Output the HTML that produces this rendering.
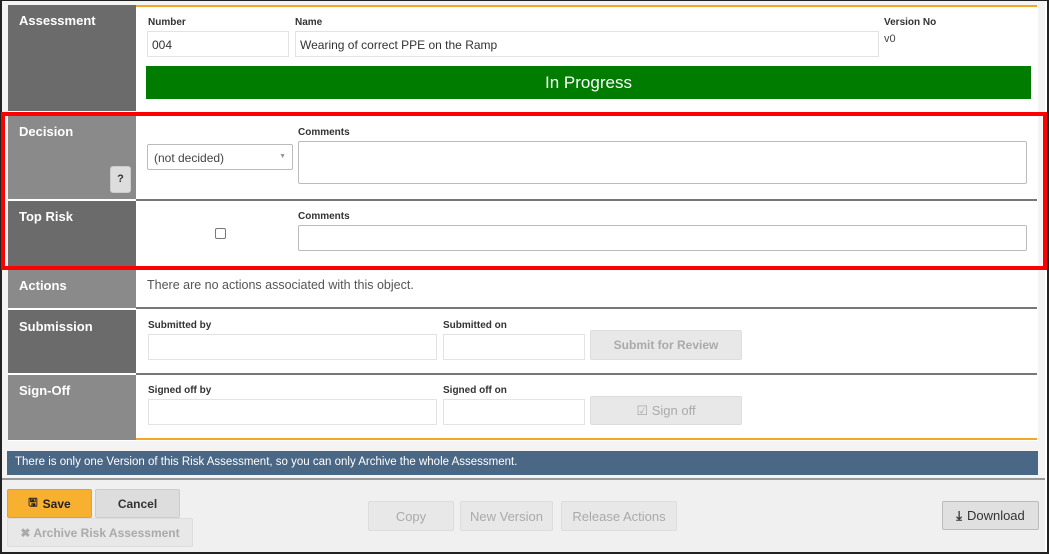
<!DOCTYPE html>
<html><head><style>
*{box-sizing:border-box;margin:0;padding:0}
body{width:1049px;height:554px;background:#fff;font-family:"Liberation Sans",sans-serif;position:relative;overflow:hidden}
.a{position:absolute}
.lab{color:#fff;font-weight:bold;font-size:13px;padding:8px 0 0 11px}
.fl{font-size:10px;font-weight:bold;color:#333}
.in{background:#fff;border:1px solid #e3e3e3}
.btn{background:#e8e8e8;border:1px solid #ddd;border-radius:2px;color:#aaa;font-size:12px;font-weight:bold;text-align:center;display:flex;align-items:center;justify-content:center;gap:5px}
.sep{background:#777;height:2px}
</style></head><body>
<div class="a" style="left:0;top:0;width:1049px;height:554px;border:2px solid #222;border-top:1px solid #222;background:#fff"></div>
<div class="a" style="left:2px;top:1px;width:1043px;height:551px;background:#f4f4f4"></div>
<div class="a" style="left:8px;top:5px;width:1030px;height:436px;background:#fff"></div>
<div class="a lab" style="left:8px;top:5px;width:128px;height:106px;background:#6b6b6b">Assessment</div>
<div class="a lab" style="left:8px;top:116px;width:128px;height:83px;background:#8a8a8a">Decision</div>
<div class="a lab" style="left:8px;top:201px;width:128px;height:66px;background:#6b6b6b">Top Risk</div>
<div class="a lab" style="left:8px;top:269px;width:128px;height:39px;background:#8a8a8a;padding-top:9px">Actions</div>
<div class="a lab" style="left:8px;top:310px;width:128px;height:63px;background:#6b6b6b;padding-top:9px">Submission</div>
<div class="a lab" style="left:8px;top:375px;width:128px;height:65px;background:#8a8a8a">Sign-Off</div>
<div class="a" style="left:136px;top:5px;width:901px;height:2px;background:#f5a623"></div>
<div class="a" style="left:136px;top:438px;width:901px;height:2px;background:#f5a623"></div>
<div class="a sep" style="left:136px;top:199px;width:901px"></div>
<div class="a sep" style="left:136px;top:307px;width:901px"></div>
<div class="a sep" style="left:136px;top:373px;width:901px"></div>
<div class="a fl" style="left:148px;top:17px">Number</div>
<div class="a in" style="left:147px;top:31px;width:142px;height:26px;font-size:12px;color:#333;padding:6px 4px">004</div>
<div class="a fl" style="left:295px;top:17px">Name</div>
<div class="a in" style="left:295px;top:31px;width:584px;height:26px;font-size:12px;color:#333;padding:6px 4px">Wearing of correct PPE on the Ramp</div>
<div class="a fl" style="left:884px;top:17px">Version No</div>
<div class="a" style="left:884px;top:33px;font-size:11px;color:#444">v0</div>
<div class="a" style="left:146px;top:66px;width:885px;height:33px;background:#007c00;color:#fff;font-size:17px;text-align:center;line-height:33px">In Progress</div>
<div class="a" style="left:147px;top:144px;width:146px;height:26px;border:1px solid #bbb;border-radius:2px;font-size:12px;color:#444;padding:6px 6px">(not decided)<span style="position:absolute;right:6px;top:8px;font-size:7px;color:#999">▼</span></div>
<div class="a fl" style="left:298px;top:127px">Comments</div>
<div class="a" style="left:298px;top:141px;width:729px;height:43px;border:1px solid #bbb;border-radius:2px"></div>
<div class="a" style="left:110px;top:166px;width:21px;height:27px;background:#ddd;border:1px solid #ccc;border-radius:3px;font-size:11px;font-weight:bold;color:#333;text-align:center;line-height:25px">?</div>
<div class="a" style="left:215px;top:228px;width:11px;height:11px;border:1px solid #777;border-radius:2px"></div>
<div class="a fl" style="left:298px;top:211px">Comments</div>
<div class="a" style="left:298px;top:225px;width:729px;height:26px;border:1px solid #bbb;border-radius:2px"></div>
<div class="a" style="left:147px;top:278px;font-size:12.5px;color:#555">There are no actions associated with this object.</div>
<div class="a fl" style="left:148px;top:320px">Submitted by</div>
<div class="a in" style="left:148px;top:334px;width:289px;height:26px"></div>
<div class="a fl" style="left:443px;top:320px">Submitted on</div>
<div class="a in" style="left:443px;top:334px;width:142px;height:26px"></div>
<div class="a btn" style="left:590px;top:330px;width:152px;height:30px">Submit for Review</div>
<div class="a fl" style="left:148px;top:385px">Signed off by</div>
<div class="a in" style="left:148px;top:399px;width:289px;height:26px"></div>
<div class="a fl" style="left:443px;top:385px">Signed off on</div>
<div class="a in" style="left:443px;top:399px;width:142px;height:26px"></div>
<div class="a btn" style="left:590px;top:396px;width:152px;height:29px;font-weight:normal;font-size:13px">☑ Sign off</div>
<div class="a" style="left:7px;top:451px;width:1031px;height:24px;background:#4a6785;color:#fff;font-size:11.5px;padding:5px 8px">There is only one Version of this Risk Assessment, so you can only Archive the whole Assessment.</div>
<div class="a" style="left:2px;top:478px;width:1043px;height:2px;background:#999"></div>
<div class="a" style="left:2px;top:480px;width:1043px;height:72px;background:#f0f0f0"></div>
<div class="a btn" style="left:7px;top:489px;width:85px;height:29px;background:#f7b030;border-color:#e9a020;color:#222"><span style="font-size:11px">🖫</span><span>Save</span></div>
<div class="a btn" style="left:95px;top:489px;width:85px;height:29px;background:#ddd;border-color:#ccc;color:#333">Cancel</div>
<div class="a btn" style="left:7px;top:518px;width:186px;height:29px">✖ Archive Risk Assessment</div>
<div class="a btn" style="left:368px;top:501px;width:86px;height:30px;font-weight:normal;font-size:13px">Copy</div>
<div class="a btn" style="left:460px;top:501px;width:93px;height:30px;font-weight:normal;font-size:13px">New Version</div>
<div class="a btn" style="left:561px;top:501px;width:116px;height:30px;font-weight:normal;font-size:13px">Release Actions</div>
<div class="a btn" style="left:942px;top:501px;width:97px;height:29px;background:#e0e0e0;border-color:#bbb;color:#333;font-weight:normal;font-size:13px"><b>⤓</b>Download</div>
<div class="a" style="left:1px;top:112px;width:1046px;height:158px;border:4px solid #f00"></div>
</body></html>
